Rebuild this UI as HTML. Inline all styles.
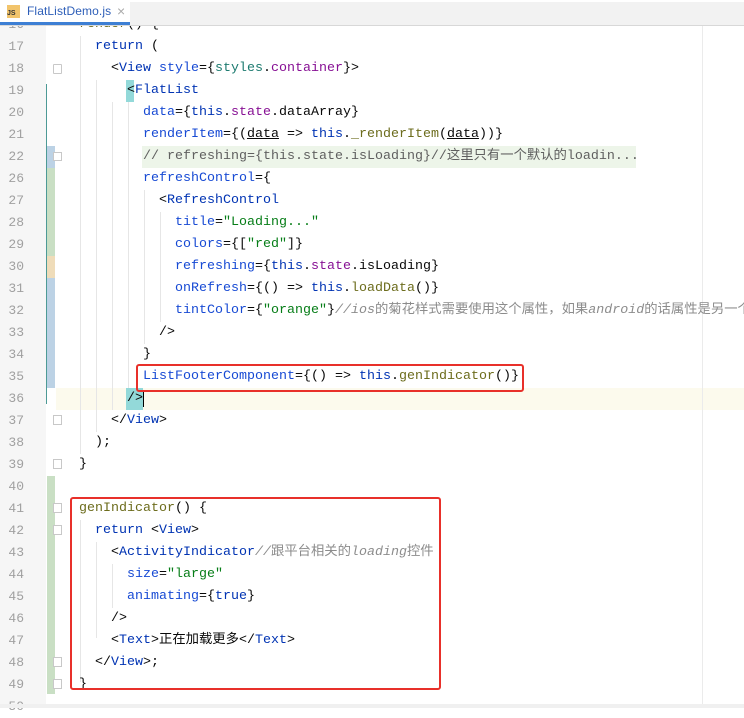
<!DOCTYPE html>
<html><head><meta charset="utf-8"><style>
*{margin:0;padding:0;box-sizing:border-box}
body{width:744px;height:708px;overflow:hidden;background:#fff;position:relative;font-family:"Liberation Mono","Noto Sans CJK SC",monospace;font-size:13.33px}
.abs{position:absolute}
.ln{position:absolute;left:0;width:24px;text-align:right;color:#a0a0a0;font-size:13px;height:22px;line-height:22px;padding-right:0}
.code{position:absolute;white-space:pre;height:22px;line-height:22px;color:#080808}
.k{color:#0033b3}.t{color:#0033b3}.a{color:#174ad4}.s{color:#067d17}.p{color:#871094}.f{color:#6c6c1c}.g{color:#1c7a6f}.c{color:#8c8c8c}.ci{color:#8c8c8c;font-style:italic}
.guide{position:absolute;width:1px;background:#e6e6e6}
</style></head><body>
<div class="abs" style="left:0;top:0;width:46px;height:708px;background:#f6f6f6"></div>
<div class="abs" style="left:46px;top:84px;width:1px;height:320px;background:#4d9a96"></div>
<div class="abs" style="left:47px;top:146px;width:8px;height:22px;background:#bcd2e5"></div>
<div class="abs" style="left:47px;top:168px;width:8px;height:88px;background:#c9dfc4"></div>
<div class="abs" style="left:47px;top:256px;width:8px;height:22px;background:#efdcb9"></div>
<div class="abs" style="left:47px;top:278px;width:8px;height:110px;background:#bcd2e5"></div>
<div class="abs" style="left:47px;top:476px;width:8px;height:218px;background:#c9dfc4"></div>
<div class="abs" style="left:56px;top:388px;width:688px;height:22px;background:#fcfaed"></div>
<div class="abs" style="left:142px;top:146px;width:494px;height:22px;background:#edf5e9"></div>
<div class="abs" style="left:126px;top:80px;width:8px;height:22px;background:#93d9d9"></div>
<div class="abs" style="left:126px;top:388px;width:17px;height:22px;background:#93d9d9"></div>
<div class="abs" style="left:143px;top:391px;width:1px;height:16px;background:#000"></div>
<div class="abs" style="left:702px;top:25px;width:1px;height:680px;background:#ebebeb"></div>
<div class="guide" style="left:80px;top:36px;height:418px"></div>
<div class="guide" style="left:96px;top:80px;height:352px"></div>
<div class="guide" style="left:112px;top:102px;height:308px"></div>
<div class="guide" style="left:128px;top:102px;height:286px"></div>
<div class="guide" style="left:144px;top:190px;height:154px"></div>
<div class="guide" style="left:160px;top:212px;height:110px"></div>
<div class="guide" style="left:80px;top:520px;height:162px"></div>
<div class="guide" style="left:96px;top:542px;height:96px"></div>
<div class="guide" style="left:112px;top:564px;height:44px"></div>

<div class="ln" style="top:14px">16</div>
<div class="ln" style="top:36px">17</div>
<div class="ln" style="top:58px">18</div>
<div class="ln" style="top:80px">19</div>
<div class="ln" style="top:102px">20</div>
<div class="ln" style="top:124px">21</div>
<div class="ln" style="top:146px">22</div>
<div class="ln" style="top:168px">26</div>
<div class="ln" style="top:190px">27</div>
<div class="ln" style="top:212px">28</div>
<div class="ln" style="top:234px">29</div>
<div class="ln" style="top:256px">30</div>
<div class="ln" style="top:278px">31</div>
<div class="ln" style="top:300px">32</div>
<div class="ln" style="top:322px">33</div>
<div class="ln" style="top:344px">34</div>
<div class="ln" style="top:366px">35</div>
<div class="ln" style="top:388px">36</div>
<div class="ln" style="top:410px">37</div>
<div class="ln" style="top:432px">38</div>
<div class="ln" style="top:454px">39</div>
<div class="ln" style="top:476px">40</div>
<div class="ln" style="top:498px">41</div>
<div class="ln" style="top:520px">42</div>
<div class="ln" style="top:542px">43</div>
<div class="ln" style="top:564px">44</div>
<div class="ln" style="top:586px">45</div>
<div class="ln" style="top:608px">46</div>
<div class="ln" style="top:630px">47</div>
<div class="ln" style="top:652px">48</div>
<div class="ln" style="top:674px">49</div>
<div class="ln" style="top:696px">50</div>

<div class="code" style="left:79px;top:14px"><span class="f">render</span>() {</div>
<div class="code" style="left:95px;top:36px"><span class="k">return</span> (</div>
<div class="code" style="left:111px;top:58px">&lt;<span class="t">View</span> <span class="a">style</span>={<span class="g">styles</span>.<span class="p">container</span>}&gt;</div>
<div class="code" style="left:127px;top:80px">&lt;<span class="t">FlatList</span></div>
<div class="code" style="left:143px;top:102px"><span class="a">data</span>={<span class="k">this</span>.<span class="p">state</span>.dataArray}</div>
<div class="code" style="left:143px;top:124px"><span class="a">renderItem</span>={(<u>data</u> =&gt; <span class="k">this</span>.<span class="f">_renderItem</span>(<u>data</u>))}</div>
<div class="code c" style="left:143px;top:146px;color:#5f5f5f">// refreshing={this.state.isLoading}//这里只有一个默认的loadin...</div>
<div class="code" style="left:143px;top:168px"><span class="a">refreshControl</span>={</div>
<div class="code" style="left:159px;top:190px">&lt;<span class="t">RefreshControl</span></div>
<div class="code" style="left:175px;top:212px"><span class="a">title</span>=<span class="s">"Loading..."</span></div>
<div class="code" style="left:175px;top:234px"><span class="a">colors</span>={[<span class="s">"red"</span>]}</div>
<div class="code" style="left:175px;top:256px"><span class="a">refreshing</span>={<span class="k">this</span>.<span class="p">state</span>.isLoading}</div>
<div class="code" style="left:175px;top:278px"><span class="a">onRefresh</span>={() =&gt; <span class="k">this</span>.<span class="f">loadData</span>()}</div>
<div class="code" style="left:175px;top:300px"><span class="a">tintColor</span>={<span class="s">"orange"</span>}<span class="ci">//ios</span><span class="c">的菊花样式需要使用这个属性，如果</span><span class="ci">android</span><span class="c">的话属性是另一个</span></div>
<div class="code" style="left:159px;top:322px">/&gt;</div>
<div class="code" style="left:143px;top:344px">}</div>
<div class="code" style="left:143px;top:366px"><span class="a">ListFooterComponent</span>={() =&gt; <span class="k">this</span>.<span class="f">genIndicator</span>()}</div>
<div class="code" style="left:127px;top:388px">/&gt;</div>
<div class="code" style="left:111px;top:410px">&lt;/<span class="t">View</span>&gt;</div>
<div class="code" style="left:95px;top:432px">);</div>
<div class="code" style="left:79px;top:454px">}</div>
<div class="code" style="left:79px;top:498px"><span class="f">genIndicator</span>() {</div>
<div class="code" style="left:95px;top:520px"><span class="k">return</span> &lt;<span class="t">View</span>&gt;</div>
<div class="code" style="left:111px;top:542px">&lt;<span class="t">ActivityIndicator</span><span class="ci">//</span><span class="c">跟平台相关的</span><span class="ci">loading</span><span class="c">控件</span></div>
<div class="code" style="left:127px;top:564px"><span class="a">size</span>=<span class="s">"large"</span></div>
<div class="code" style="left:127px;top:586px"><span class="a">animating</span>={<span class="k">true</span>}</div>
<div class="code" style="left:111px;top:608px">/&gt;</div>
<div class="code" style="left:111px;top:630px">&lt;<span class="t">Text</span>&gt;正在加载更多&lt;/<span class="t">Text</span>&gt;</div>
<div class="code" style="left:95px;top:652px">&lt;/<span class="t">View</span>&gt;;</div>
<div class="code" style="left:79px;top:674px">}</div>

<div class="abs" style="left:53px;top:64px;width:9px;height:10px;border:1px solid #c8c8c8;border-radius:1px;background:#fff"></div>
<div class="abs" style="left:53px;top:152px;width:9px;height:9px;border:1px solid #c8c8c8;background:#fff"></div>
<div class="abs" style="left:53px;top:415px;width:9px;height:10px;border:1px solid #c8c8c8;background:#fff"></div>
<div class="abs" style="left:53px;top:459px;width:9px;height:10px;border:1px solid #c8c8c8;background:#fff"></div>
<div class="abs" style="left:53px;top:503px;width:9px;height:10px;border:1px solid #c8c8c8;background:#fff"></div>
<div class="abs" style="left:53px;top:525px;width:9px;height:10px;border:1px solid #c8c8c8;background:#fff"></div>
<div class="abs" style="left:53px;top:657px;width:9px;height:10px;border:1px solid #c8c8c8;background:#fff"></div>
<div class="abs" style="left:53px;top:679px;width:9px;height:10px;border:1px solid #c8c8c8;background:#fff"></div>

<div class="abs" style="left:136px;top:364px;width:388px;height:28px;border:2px solid #e8302a;border-radius:3px"></div>
<div class="abs" style="left:70px;top:497px;width:371px;height:193px;border:2px solid #e8302a;border-radius:3px"></div>

<div class="abs" style="left:0;top:704px;width:744px;height:4px;background:#f0f0f0"></div>

<div class="abs" style="left:0;top:0;width:744px;height:2px;background:#fff"></div>
<div class="abs" style="left:0;top:2px;width:744px;height:24px;background:#f2f2f2;border-bottom:1px solid #d8d8d8"></div>
<div class="abs" style="left:0;top:2px;width:130px;height:21px;background:#fff"></div>
<div class="abs" style="left:0;top:22px;width:130px;height:3px;background:#3d7fd4"></div>
<div class="abs" style="left:7px;top:5px;width:13px;height:13px;background:#f2c46b"></div>
<div class="abs" style="left:7px;top:10px;font:bold 7px 'Liberation Sans',sans-serif;color:#333">JS</div>
<div class="abs" style="left:27px;top:4px;font:12px 'Liberation Sans',sans-serif;color:#2d5eb8;letter-spacing:0.1px">FlatListDemo.js</div>
<div class="abs" style="left:117px;top:3px;font:14px 'Liberation Sans',sans-serif;color:#aaa">×</div>
</body></html>
